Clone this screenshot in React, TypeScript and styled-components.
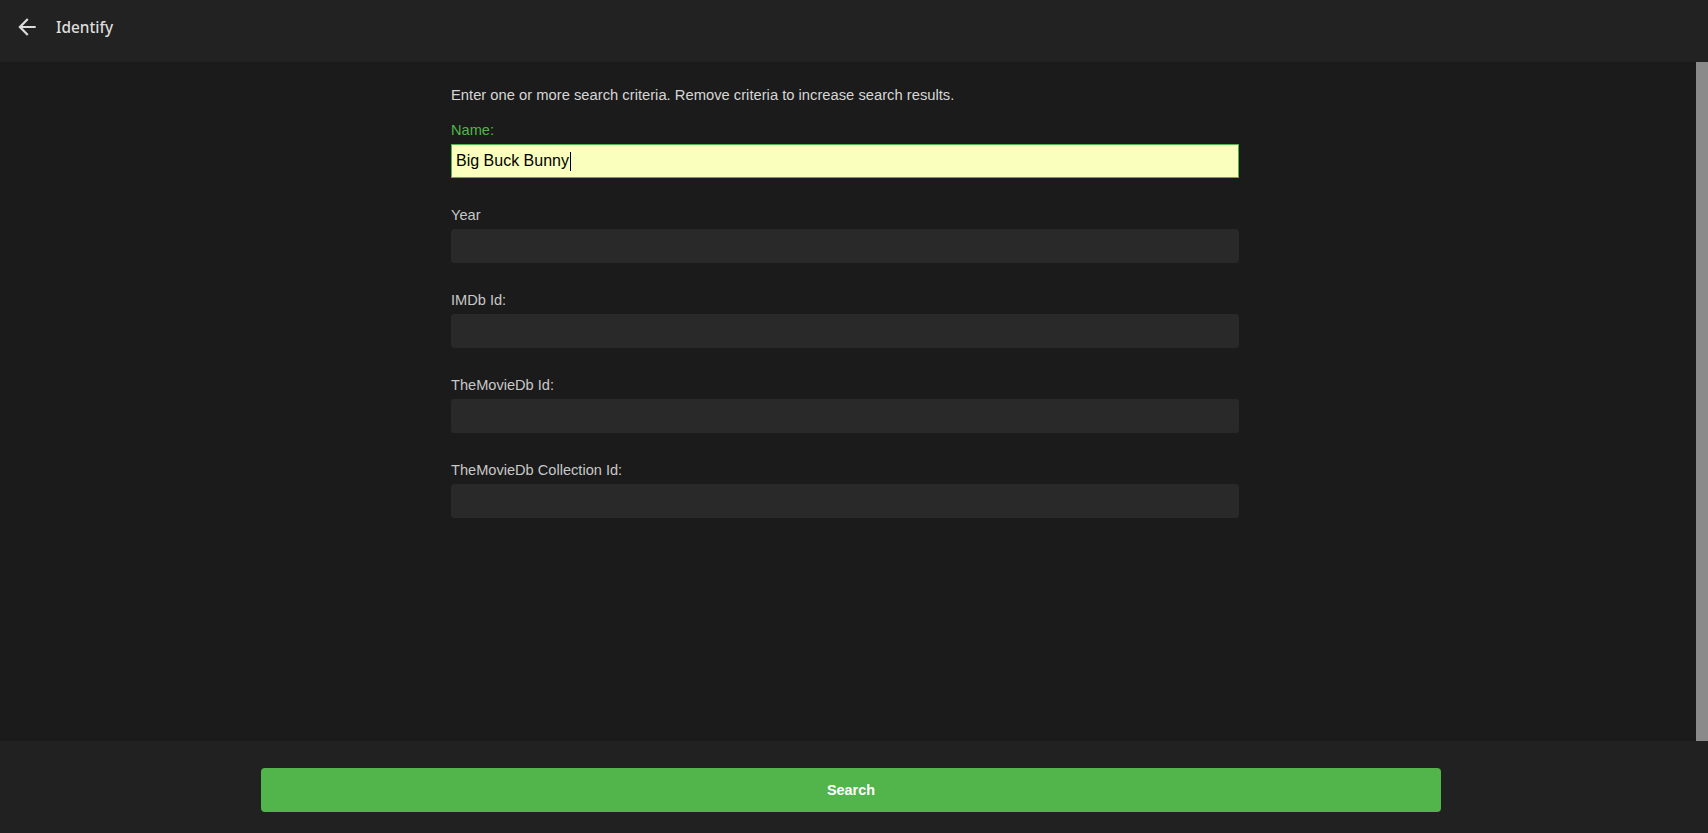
import React from "react"
import styled, { createGlobalStyle } from "styled-components"

const GlobalStyle = createGlobalStyle`
  html, body {
    margin: 0;
    padding: 0;
    height: 100%;
    background: #1b1b1b;
    overflow: hidden;
  }
  #root {
    height: 100%;
  }
  * {
    box-sizing: border-box;
  }
`

const fields = [
  { label: "Year", value: "" },
  { label: "IMDb Id:", value: "" },
  { label: "TheMovieDb Id:", value: "" },
  { label: "TheMovieDb Collection Id:", value: "" },
]

const BackArrow: React.FC = () => (
  <svg width="26" height="26" viewBox="0 0 24 24" fill="currentColor">
    <path d="M20 11H7.83l5.59-5.59L12 4l-8 8 8 8 1.41-1.41L7.83 13H20v-2z" />
  </svg>
)

const App: React.FC = () => (
  <Page>
    <GlobalStyle />
    <Header>
      <BackButton aria-label="Back">
        <BackArrow />
      </BackButton>
      <Title>Identify</Title>
    </Header>
    <Body>
      <Main>
        <Form onSubmit={(e) => e.preventDefault()}>
          <Hint>Enter one or more search criteria. Remove criteria to increase search results.</Hint>
          <Field>
            <Label $active>Name:</Label>
            <InputWrap>
              <Input $active defaultValue="Big Buck Bunny" autoFocus />
              <Caret />
            </InputWrap>
          </Field>
          {fields.map((f) => (
            <Field key={f.label}>
              <Label>{f.label}</Label>
              <Input defaultValue={f.value} />
            </Field>
          ))}
        </Form>
      </Main>
      <ScrollRail />
    </Body>
    <Footer>
      <SearchButton type="button">Search</SearchButton>
    </Footer>
  </Page>
)
export default App

const Page = styled.div`
  display: flex;
  flex-direction: column;
  height: 100vh;
  font-family: "Liberation Sans", Arial, sans-serif;
`

const Header = styled.header`
  display: flex;
  align-items: center;
  height: 62px;
  padding: 0 0 8px 14px;
  background: #222222;
  color: #dddddd;
  flex-shrink: 0;
`

const BackButton = styled.button`
  display: flex;
  align-items: center;
  justify-content: center;
  width: 26px;
  height: 26px;
  padding: 0;
  border: none;
  background: transparent;
  color: #dcdcdc;
  cursor: pointer;
`

const Title = styled.h1`
  margin: 0 0 0 16px;
  font-family: "Noto Sans", "Open Sans", sans-serif;
  font-size: 15.4px;
  font-weight: 500;
  color: #dddddd;
`

const Body = styled.div`
  flex: 1;
  display: flex;
  min-height: 0;
`

const Main = styled.main`
  flex: 1;
  overflow-y: auto;
  padding-right: 6px;
`

const ScrollRail = styled.div`
  width: 12px;
  flex-shrink: 0;
  background: #8a8a8a;
`

const Form = styled.form`
  width: 788px;
  margin: 0 auto;
  padding-top: 25px;
`

const Hint = styled.p`
  margin: 0 0 18px;
  font-size: 14.75px;
  line-height: 17px;
  color: #d6d6d6;
`

const Field = styled.div`
  display: flex;
  flex-direction: column;
  margin-bottom: 29px;
`

const Label = styled.label<{ $active?: boolean }>`
  font-size: 14.6px;
  line-height: 17px;
  margin-bottom: 5px;
  color: ${(p) => (p.$active ? "#52b54b" : "#c8c8c8")};
`

const InputWrap = styled.div`
  position: relative;
`

const Caret = styled.span`
  position: absolute;
  left: 119px;
  top: 8px;
  width: 1px;
  height: 19px;
  background: #000000;
  pointer-events: none;
`

const Input = styled.input<{ $active?: boolean }>`
  display: block;
  height: 34px;
  width: 100%;
  padding: 0 4px;
  font-family: "Liberation Sans", Arial, sans-serif;
  font-size: 16px;
  color: #000000;
  caret-color: transparent;
  border-radius: ${(p) => (p.$active ? "0" : "3px")};
  border: 1px solid ${(p) => (p.$active ? "#52b54b" : "#292929")};
  background: ${(p) => (p.$active ? "#faffbd" : "#292929")};
  outline: none;
`

const Footer = styled.footer`
  display: flex;
  justify-content: center;
  flex-shrink: 0;
  height: 92px;
  padding: 27px 6px 0 0;
  background: #212121;
`

const SearchButton = styled.button`
  width: 1180px;
  height: 44px;
  border: none;
  border-radius: 4px;
  background: #52b54b;
  color: #ffffff;
  font-family: "Liberation Sans", Arial, sans-serif;
  font-size: 14.4px;
  font-weight: bold;
  cursor: pointer;
`
